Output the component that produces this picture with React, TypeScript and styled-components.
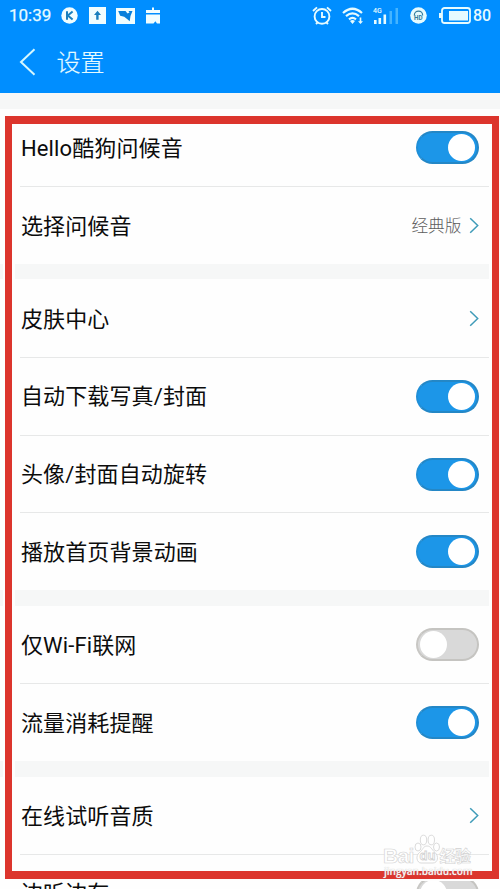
import React from "react";
import styled, { createGlobalStyle } from "styled-components";

const GlobalStyle = createGlobalStyle`
  * { box-sizing: border-box; }
  html, body { margin: 0; padding: 0; }
  body { background: #fefefe; overflow: hidden; }
`;

const Screen = styled.div`
  position: relative;
  width: 500px;
  height: 889px;
  overflow: hidden;
  background: #fefefe;
  color: #0c0c0c;
  font-family: Roboto, "Noto Sans CJK SC", sans-serif;
`;

const Header = styled.header`
  height: 93px;
  background: #008eff;
  color: #e6fbff;
`;

const StatusBar = styled.div`
  height: 31px;
  display: flex;
  align-items: center;
  justify-content: space-between;
  padding: 0 9px 0 9px;
  font: 500 17px/31px Roboto, sans-serif;
`;

const StatusGroup = styled.div`
  display: flex;
  align-items: center;
  height: 31px;
`;

const Clock = styled.span`
  width: 52px;
  font-size: 17px;
  font-weight: 400;
  -webkit-text-stroke: 0.25px #e6fbff;
`;

const Glyph = styled.svg<{ $gap?: number }>`
  display: block;
  flex: none;
  margin-left: ${(p) => p.$gap ?? 0}px;
`;

const BatteryLevel = styled.span`
  margin-left: 2px;
  width: 18px;
  font-size: 16px;
  letter-spacing: -0.2px;
`;

const TitleBar = styled.div`
  height: 62px;
  display: flex;
  align-items: center;
  padding-left: 19px;
`;

const Title = styled.h1`
  margin: 0 0 0 20.5px;
  padding-top: 2px;
  font-size: 24px;
  line-height: 60px;
  font-weight: 300;
  -webkit-text-stroke: 0.2px #e6fbff;
`;

const Gap = styled.div`
  height: 15.6px;
  background: #f6f7f7;
`;

const Row = styled.div<{ $divided?: boolean }>`
  height: 77.65px;
  margin-left: 20px;
  margin-right: 11px;
  padding: 0 10px 0 1px;
  display: flex;
  align-items: center;
  border-top: 1px solid ${(p) => (p.$divided ? "#e7e8e8" : "transparent")};
`;

const Label = styled.span`
  flex: 1;
  padding-top: 2px;
  font-size: 22px;
  line-height: 32px;
  letter-spacing: 0.12px;
  white-space: nowrap;
`;

const Value = styled.span`
  margin-right: 7.5px;
  padding-top: 2px;
  font-size: 16.7px;
  line-height: 24px;
  font-weight: 300;
  color: #5c5c5c;
`;

const Track = styled.span<{ $on: boolean }>`
  width: 63px;
  height: 33px;
  padding: 0 2px;
  border-radius: 17px;
  border: 2px solid ${(p) => (p.$on ? "#2487c6" : "#c5c4c1")};
  border-left-color: ${(p) => (p.$on ? "#208fd7" : "#c8c7c4")};
  background: ${(p) => (p.$on ? "#1c96e8" : "#d9d9d9")};
  display: flex;
  align-items: center;
  justify-content: ${(p) => (p.$on ? "flex-end" : "flex-start")};
`;

const Knob = styled.span`
  width: 27px;
  height: 27px;
  border-radius: 50%;
  background: #fff;
`;

const Frame = styled.div`
  position: absolute;
  left: 5px;
  top: 116px;
  width: 494px;
  height: 763px;
  border: 7px solid #dc352d;
  border-top-width: 8px;
  border-bottom-width: 8px;
  box-shadow: 0 0 0 2px #fefefe, inset 3px 0 0 #fefefe, inset -3px 0 0 #fefefe;
`;

const Watermark = styled.div`
  position: absolute;
  left: 383px;
  top: 835px;
  width: 92px;
  height: 46px;
`;

const Brand = styled.div`
  height: 30px;
  display: flex;
  align-items: flex-end;
  color: #fff;
  -webkit-text-stroke: 0.6px #d2d2d2;
`;

const BrandWord = styled.span`
  margin-bottom: -2px;
  font: 700 21px/23px "Liberation Sans", sans-serif;
  letter-spacing: -0.7px;
`;

const BrandSuffix = styled.span`
  margin-bottom: -3px;
  font: 700 16px/25px "Noto Sans CJK SC", sans-serif;
  letter-spacing: -0.5px;
`;

const SiteName = styled.div`
  font: 600 10px/12px "Open Sans", sans-serif;
  margin-left: 1px;
  color: rgba(255, 255, 255, 0.9);
  white-space: nowrap;
  text-shadow: 0 0 1px #bbb;
`;

function Toggle({ on }: { on: boolean }) {
  return (
    <Track $on={on}>
      <Knob />
    </Track>
  );
}

function Chevron() {
  return (
    <Glyph width="10" height="17" viewBox="0 0 10 17" fill="none" stroke="#3f9bb8" strokeWidth="1.5">
      <path d="M1.2 1.2 8.7 8.5 1.2 15.8" />
    </Glyph>
  );
}

function Notifications() {
  return (
    <>
      <Glyph width="17" height="17" viewBox="0 0 17 17">
        <circle cx="8.5" cy="8.5" r="8.2" fill="#f0fdff" />
        <path d="M6 4.2v8.6M11.6 4.5 6.8 8.6l4.8 4" fill="none" stroke="#197fbd" strokeWidth="2" />
      </Glyph>
      <Glyph $gap={11} width="17" height="17" viewBox="0 0 17 17">
        <path d="M0 0h17v17H0z" fill="#f0fdff" />
        <path d="M8.5 3.8 12 8H9.6v4.8H7.2V8H5z" fill="#197fbd" />
      </Glyph>
      <Glyph $gap={10} width="19" height="16" viewBox="0 0 19 16">
        <path d="M0 0h19v16H0z" fill="#f0fdff" />
        <path d="M2.2 3h14.300l-2 5-.8 5.200-2-1.700-3.500-2.800-4-1z" fill="#087fdb" />
        <path d="M9.500 3h3l1 1.500-2 1z" fill="#f0fdff" />
      </Glyph>
      <Glyph $gap={10} width="16" height="17" viewBox="0 0 16 17">
        <path d="M7 .5h2V3h6v3H1V3h6zM1 7.5h14v9h-3l-1.6-2.2L8.5 16.5H1z" fill="#f0fdff" />
      </Glyph>
    </>
  );
}

function SystemStatus() {
  return (
    <>
      <Glyph width="20" height="20" viewBox="0 0 20 20" fill="none" stroke="#e6fbff" strokeWidth="1.9">
        <circle cx="10" cy="10.4" r="7.4" />
        <path d="M10 6v5h3.5M1 5l4-3.6M19 5l-4-3.6M4 18l2-2M16 18l-2-2" />
      </Glyph>
      <Glyph $gap={10} width="22" height="18" viewBox="0 0 22 18" fill="none" stroke="#e6fbff" strokeWidth="2.2">
        <path d="M1 6q9.5-8.5 19 0M4 9.2q6.5-5.5 13 0M7 12.3q3.5-2.8 7 0" />
        <path d="M10.5 17 8 14q2.5-2 5 0zM16 14.3h5L18.5 17z" fill="#e6fbff" stroke="none" />
        <path d="M18.5 10.5v4.5" strokeWidth="1.6" />
      </Glyph>
      <Glyph $gap={9} width="26" height="18" viewBox="0 0 26 18">
        <text x="0" y="6.3" fontFamily="Roboto, sans-serif" fontSize="7" fontWeight="500" fill="#e6fbff">4G</text>
        <path d="M1 13h2.6v4H1zM5.5 11h2.6v6H5.5zM10.5 7.5h2.6V17h-2.6z" fill="#e6fbff" />
        <path d="M16.5 4H19v13h-2.5zM22.5 1H25v16h-2.5z" fill="#45b4ff" />
      </Glyph>
      <Glyph $gap={11} width="17" height="17" viewBox="0 0 17 17">
        <circle cx="8.5" cy="8.5" r="8.3" fill="#e6fbff" />
        <path d="M4.4 8.500V8a4.100 3.800 0 0 1 8.200 0v.5" fill="none" stroke="#347c9c" strokeWidth="1.2" />
        <text x="4" y="12.5" fontFamily="Roboto, sans-serif" fontSize="6.3" fontWeight="700" fill="#347c9c">HD</text>
      </Glyph>
      <Glyph $gap={12} width="32" height="17" viewBox="0 0 32 17">
        <rect x="3" y="1" width="28" height="15" rx="2.5" fill="none" stroke="#e6fbff" strokeWidth="1.8" />
        <path d="M0 6h3v5H0zM10 4h19v9.5H10z" fill="#e6fbff" />
      </Glyph>
    </>
  );
}

function BearPaw() {
  return (
    <Glyph width="26" height="32" viewBox="0 0 26 32" fill="#fff" stroke="#d2d2d2" strokeWidth="0.8">
      <ellipse cx="4" cy="14" rx="3" ry="4" />
      <ellipse cx="9.5" cy="7" rx="3.2" ry="4.8" />
      <ellipse cx="17.3" cy="7" rx="3.2" ry="4.8" />
      <ellipse cx="22.5" cy="14" rx="3" ry="4" />
      <path d="M13 13c-4 0-4 4-7.5 6.5C1 23 3 30 7 30h12c5 0 6-7 2-10.5C17.5 16.5 17 13 13 13Z" />
      <text x="5.5" y="27.3" fontFamily="Liberation Sans, sans-serif" fontSize="13" fontWeight="700">du</text>
    </Glyph>
  );
}

type Setting = { label: string; on?: boolean; value?: string };

const sections: Setting[][] = [
  [
    { label: "Hello酷狗问候音", on: true },
    { label: "选择问候音", value: "经典版" },
  ],
  [
    { label: "皮肤中心" },
    { label: "自动下载写真/封面", on: true },
    { label: "头像/封面自动旋转", on: true },
    { label: "播放首页背景动画", on: true },
  ],
  [
    { label: "仅Wi-Fi联网", on: false },
    { label: "流量消耗提醒", on: true },
  ],
  [{ label: "在线试听音质" }, { label: "边听边存", on: false }],
];

export default function App() {
  return (
    <Screen>
      <GlobalStyle />
      <Header>
        <StatusBar>
          <StatusGroup>
            <Clock>10:39</Clock>
            <Notifications />
          </StatusGroup>
          <StatusGroup>
            <SystemStatus />
            <BatteryLevel>80</BatteryLevel>
          </StatusGroup>
        </StatusBar>
        <TitleBar>
          <Glyph width="17" height="28" viewBox="0 0 17 28" fill="none" stroke="#d5f7ff" strokeWidth="2">
            <path d="M15.5 1.2 2 14l13.5 12.8" />
          </Glyph>
          <Title>设置</Title>
        </TitleBar>
      </Header>
      {sections.map((rows, s) => (
        <React.Fragment key={s}>
          <Gap />
          {rows.map((row, i) => (
            <Row key={row.label} $divided={i > 0}>
              <Label>{row.label}</Label>
              {row.value && <Value>{row.value}</Value>}
              {row.on === undefined ? <Chevron /> : <Toggle on={row.on} />}
            </Row>
          ))}
        </React.Fragment>
      ))}
      <Frame />
      <Watermark>
        <Brand>
          <BrandWord>Bai</BrandWord>
          <BearPaw />
          <BrandSuffix>经验</BrandSuffix>
        </Brand>
        <SiteName>jingyan.baidu.com</SiteName>
      </Watermark>
    </Screen>
  );
}
